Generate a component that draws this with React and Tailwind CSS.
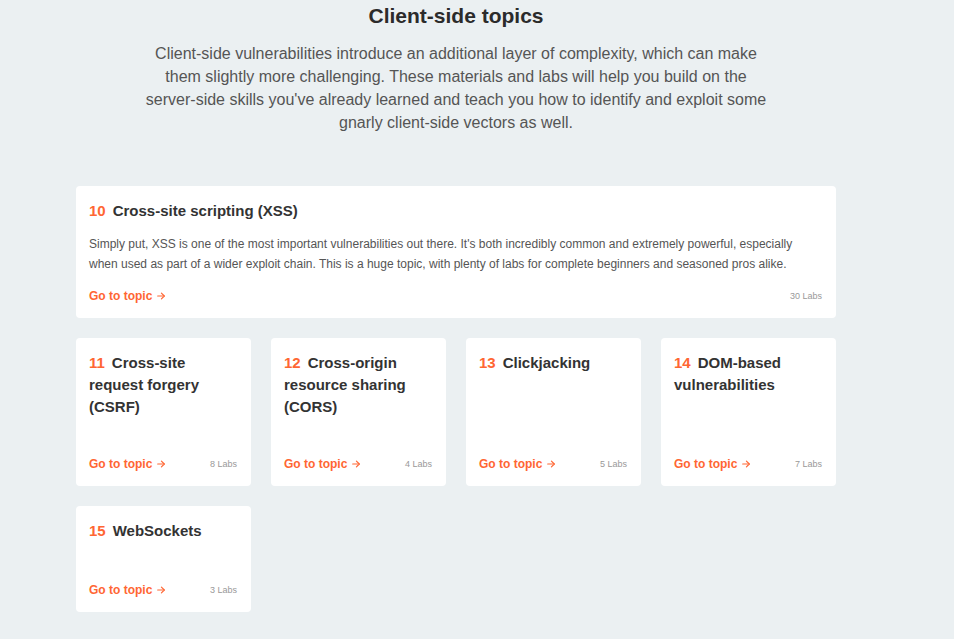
import React from 'react';

const topics = [
  { n: 11, title: 'Cross-site request forgery (CSRF)', labs: '8 Labs' },
  { n: 12, title: 'Cross-origin resource sharing (CORS)', labs: '4 Labs' },
  { n: 13, title: 'Clickjacking', labs: '5 Labs' },
  { n: 14, title: 'DOM-based vulnerabilities', labs: '7 Labs' },
  { n: 15, title: 'WebSockets', labs: '3 Labs' },
];

const Arrow = () => (
  <svg width="10" height="10" viewBox="0 0 24 24" fill="none" stroke="currentColor" strokeWidth="2.75" strokeLinecap="round" strokeLinejoin="round" className="inline-block ml-[4px] -mt-[2px]">
    <path d="M4 12h16" />
    <path d="m13 5 7 7-7 7" />
  </svg>
);

const Footer = ({ labs }) => (
  <div className="flex items-center justify-between mt-auto h-[16px]">
    <a className="text-[12px] font-bold text-[#ff6633] leading-[16px]">
      Go to topic<Arrow />
    </a>
    <span className="text-[9px] text-[#999999] leading-[16px]">{labs}</span>
  </div>
);

const CardTitle = ({ n, title }) => (
  <h3 className="text-[15px] font-bold leading-[22px] text-[#333333]">
    <span className="text-[#ff6633] mr-[7px]">{n}</span>
    {title}
  </h3>
);

export default function App() {
  return (
    <div className="min-h-[639px] w-full bg-[#ebf0f2] font-['Liberation_Sans',Arial,sans-serif] pb-[27px]">
      <div className="ml-[76px] w-[760px]">
        {/* Header */}
        <div className="flex flex-col items-center pt-[3px]">
          <h2 className="text-[21px] font-bold leading-[26px] text-[#2b2b2b]">Client-side topics</h2>
          <p className="mt-[13px] w-[630px] text-center text-[16px] leading-[23px] text-[#555555]">
            Client-side vulnerabilities introduce an additional layer of complexity, which can make them slightly more challenging. These materials and labs will help you build on the server-side skills you've already learned and teach you how to identify and exploit some gnarly client-side vectors as well.
          </p>
        </div>

        {/* Featured card */}
        <div className="mt-[52px] bg-white rounded-[4px] pt-[14px] pl-[13px] pr-[14px] pb-[14px] flex flex-col">
          <CardTitle n={10} title="Cross-site scripting (XSS)" />
          <p className="mt-[12px] text-[12px] leading-[20px] text-[#555555]">
            Simply put, XSS is one of the most important vulnerabilities out there. It's both incredibly common and extremely powerful, especially when used as part of a wider exploit chain. This is a huge topic, with plenty of labs for complete beginners and seasoned pros alike.
          </p>
          <div className="mt-[14px]">
            <Footer labs="30 Labs" />
          </div>
        </div>

        {/* Grid */}
        <div className="mt-[20px] grid grid-cols-4 gap-[20px]">
          {topics.map((t) => (
            <div key={t.n} className="min-h-[106px] bg-white rounded-[4px] pt-[14px] pl-[13px] pr-[14px] pb-[14px] flex flex-col">
              <CardTitle n={t.n} title={t.title} />
              <div className="h-[38px] shrink-0" />
              <Footer labs={t.labs} />
            </div>
          ))}
        </div>
      </div>
    </div>
  );
}
